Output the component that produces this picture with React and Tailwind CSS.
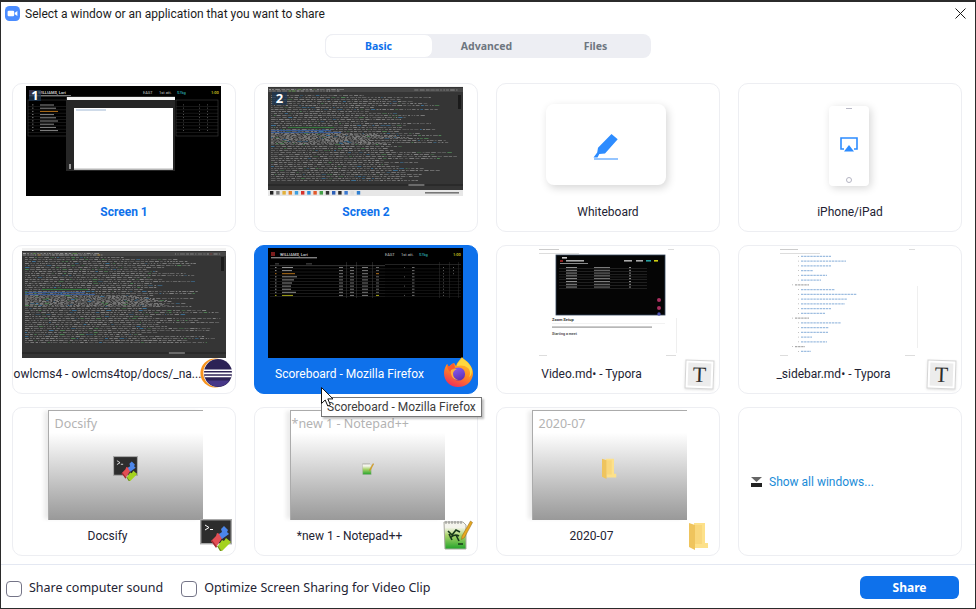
import React from 'react'

const font = { fontFamily: '"Noto Sans", "Open Sans", sans-serif' }
const labelFont = { fontFamily: 'Roboto, "Noto Sans", sans-serif' }

// small seeded generator so the greeked thumbnails stay the same on each render
function rng(seed) {
  let s = seed
  return () => {
    s = (s * 16807) % 2147483647
    return s / 2147483647
  }
}

// rows of tiny dashes standing in for unreadable, scaled down text
function textRows({ seed, x, y, width, rows, step = 2, fill = '#8e8e8e', colors = [], h = 1, minLen = 0.55 }) {
  const r = rng(seed)
  const out = []
  for (let i = 0; i < rows; i++) {
    let cx = x
    const end = x + width * (minLen + r() * (1 - minLen))
    while (cx < end) {
      const w = 1 + r() * 4
      const c = colors.length && r() < 0.1 ? colors[Math.floor(r() * colors.length)] : fill
      out.push(<rect key={i + '-' + cx} x={cx} y={y + i * step} width={w} height={h} fill={c} opacity={0.35 + r() * 0.5} />)
      cx += w + 0.7 + r()
    }
  }
  return out
}

function ScreenBadge({ n, className }) {
  return (
    <div className={'absolute flex items-center justify-center bg-[#1d3550]/75 text-white font-bold text-[13px] leading-none ' + className}>
      {n}
    </div>
  )
}

function HeaderInfo({ y }) {
  return (
    <g fontSize="4" fontFamily="Roboto" fontWeight="500">
      <text x="117" y={y} fill="#a8a8a8">EAST</text>
      <text x="133" y={y} fill="#a8a8a8">1st att.</text>
      <text x="151" y={y} fill="#2aa8a8">57kg</text>
      <text x="185" y={y} fill="#d8d820">1:00</text>
    </g>
  )
}

function Screen1Thumb() {
  return (
    <div className="relative w-[195px] h-[110px] bg-black">
      <svg width="195" height="110" className="block">
        <rect x="3" y="4" width="5" height="5" fill="#7a1c1c" />
        <text x="12" y="7.5" fontSize="4" fontWeight="700" fill="#c8c8c8" fontFamily="Roboto">WILLIAMS, Lori</text>
        <rect x="3" y="9" width="42" height="1.4" fill="#777" />
        <HeaderInfo y={7.5} />
        <rect x="2" y="14" width="61" height="36" fill="none" stroke="#3c3c3c" strokeWidth="0.6" />
        <rect x="150" y="14" width="42" height="36" fill="none" stroke="#3c3c3c" strokeWidth="0.6" />
        {[0, 1, 2, 3, 4, 5, 6, 7, 8].map((i) => (
          <g key={i}>
            <rect x="6" y={18.5 + i * 3.2} width="1.5" height="0.8" fill="#888" />
            <rect x="14" y={18.5 + i * 3.2} width={14 + (i % 3) * 2} height="1" fill={i === 2 ? '#b8741a' : '#8a8a8a'} />
            <rect x="2" y={20.5 + i * 3.2} width="61" height="0.4" fill="#383838" />
            <rect x="150" y={20.5 + i * 3.2} width="42" height="0.4" fill="#383838" />
            <rect x="157" y={18.5 + i * 3.2} width="1" height="0.8" fill="#666" />
            <rect x="173" y={18.5 + i * 3.2} width="1" height="0.8" fill="#666" />
            <rect x="181" y={18.5 + i * 3.2} width="1" height="0.8" fill="#666" />
          </g>
        ))}
        <rect x="40" y="10" width="109" height="75" fill="#262626" />
        <rect x="41" y="11" width="108" height="3" fill="#f4f4f4" />
        <rect x="48" y="22" width="99" height="62" fill="#fff" />
        <rect x="50" y="23.5" width="30" height="1" fill="#9fb7d4" />
        <rect x="48" y="82.5" width="99" height="1.5" fill="#b8b8b8" />
        <rect x="43" y="78" width="2" height="5" fill="#999" />
      </svg>
      <ScreenBadge n="1" className="left-[3px] top-[4px] w-[12px] h-[11px]" />
    </div>
  )
}

function ConsoleSvg({ width, seed, taskbar }) {
  const w = width
  const bottom = taskbar ? 104 : 110
  return (
    <svg width={w} height="110" className="block">
      <rect width={w} height="110" fill="#f2f2f2" />
      <rect y={taskbar ? 1 : 3} width={w} height={bottom} fill="#353535" />
      <rect y={taskbar ? 2 : 4} width={w} height="4" fill="#474747" />
      {textRows({ seed: seed + 1, x: 1, y: taskbar ? 3 : 5, width: w * 0.4, rows: 2, step: 1.5, fill: '#b0b0b0', colors: ['#6aa84f', '#d9a54a'], minLen: 0.9 })}
      {textRows({ seed: seed + 5, x: w * 0.75, y: taskbar ? 3.5 : 5.5, width: w * 0.24, rows: 1, fill: '#a0a0a0', colors: ['#c9423b'], minLen: 0.9 })}
      {textRows({ seed, x: 3, y: 9, width: w * 0.87, rows: 25, colors: ['#3f7fae', '#54915a'] })}
      <rect x="20" y="41" width="46" height="0.8" fill="#2f7f37" />
      <rect x="3" y="44" width="60" height="0.8" fill="#3a62a8" />
      <rect x="3" y="46" width="70" height="0.8" fill="#3a62a8" />
      {textRows({ seed: seed + 2, x: 3, y: 48, width: w * 0.96, rows: 24, colors: ['#3f7fae', '#54915a'] })}
      <rect x={w - 5} y="9" width="3" height="14" fill="#1a1a1a" />
      <rect y={bottom - 6} width={w} height="2" fill="#2a2a2a" />
      <rect x={w * 0.72} y={bottom - 6} width="16" height="2" fill="#6a6a6a" />
      {taskbar && (
        <>
          <rect y="104" width={w} height="6" fill="#e7e7e7" />
          {['#222', '#777', '#e2b13c', '#e57f2a', '#3c9fe0', '#d6322c', '#2b8fd8', '#e25a2c', '#44a047', '#333', '#2c5fb8', '#2b2b2b', '#3b79d0', '#ddd', '#2f7fd0'].map((c, i) => (
            <rect key={i} x={2 + i * 6.2} y="105" width="3.4" height="3.6" fill={c} />
          ))}
          <rect x={w - 38} y="106" width="34" height="1.6" fill="#777" />
        </>
      )}
    </svg>
  )
}

function Screen2Thumb() {
  return (
    <div className="relative w-[195px] h-[110px]">
      <ConsoleSvg width={195} seed={77} taskbar />
      <ScreenBadge n="2" className="left-[4px] top-[6px] w-[15px] h-[13px]" />
    </div>
  )
}

function ScoreboardThumb() {
  const rows = [0, 1, 2, 3, 4, 5, 6, 7, 8, 9]
  const widths = [11, 10, 13, 15, 12, 10, 9, 9, 14, 11]
  return (
    <svg width="195" height="110" className="block bg-black">
      <rect x="3" y="4" width="4" height="4" fill="#7a1c1c" />
      <text x="12" y="7.5" fontSize="4" fontWeight="700" fill="#bdbdbd" fontFamily="Roboto">WILLIAMS, Lori</text>
      <rect x="3" y="9" width="46" height="1.4" fill="#808080" />
      <HeaderInfo y={7.5} />
      <rect x="2" y="17.5" width="115" height="0.6" fill="#5a5a5a" />
      <rect x="117" y="16" width="76" height="0.5" fill="#444" />
      <rect x="7" y="15.5" width="4" height="0.8" fill="#666" />
      <rect x="38" y="15.5" width="6" height="0.8" fill="#666" />
      {[78, 88, 104].map((x) => (
        <rect key={x} x={x} y="14" width="0.4" height="36" fill="#555" />
      ))}
      {[171, 181, 190].map((x) => (
        <rect key={x} x={x} y="14" width="0.4" height="36" fill="#3e3e3e" />
      ))}
      {rows.map((i) => {
        const y = 19 + i * 3.1
        const c = i === 2 ? '#b8741a' : i === 9 ? '#a8a818' : '#8f8f8f'
        return (
          <g key={i}>
            <rect x="7" y={y} width="1.5" height="1" fill={c} />
            <rect x="14" y={y} width={widths[i]} height="1" fill={c} />
            <rect x="71" y={y} width="4" height="1" fill="#7a7a7a" />
            <rect x="82" y={y} width="4" height="1" fill="#7a7a7a" />
            <rect x="94" y={y} width="6" height="1" fill="#7a7a7a" />
            <rect x="108" y={y} width="3" height="1" fill={i === 2 || i === 9 ? c : '#666'} />
            <rect x="2" y={y + 1.7} width="115" height="0.4" fill="#3f3f3f" />
            <rect x="117" y={y + 1.7} width="76" height="0.4" fill="#2c2c2c" />
            <rect x="144" y={y} width="2.5" height="1" fill="#6c6c6c" />
            <rect x="136" y={y} width="1" height="1" fill={i % 3 === 0 ? '#5a5a5a' : '#000'} />
            <rect x="175" y={y} width="1" height="1" fill="#5c5c5c" />
            <rect x="185" y={y} width="1" height="1" fill={i < 3 ? '#5c5c5c' : '#000'} />
          </g>
        )
      })}
    </svg>
  )
}

function VideoThumb() {
  return (
    <svg width="140" height="110" className="block bg-white">
      <rect x="1" y="1" width="20" height="1" fill="#ccc" />
      <rect x="1" y="5" width="40" height="1" fill="#ddd" />
      <rect x="130" y="1" width="6" height="1" fill="#ddd" />
      <rect x="18" y="7" width="109" height="60" fill="#050505" />
      <rect x="18" y="7" width="109" height="60" fill="none" stroke="#33445a" strokeWidth="0.8" />
      <rect x="24" y="9" width="5" height="1.6" fill="#ccc" />
      <rect x="22" y="12" width="3" height="2" fill="#8c1f1f" />
      <rect x="28" y="12" width="18" height="1.6" fill="#aaa" />
      <rect x="22" y="15" width="28" height="1" fill="#888" />
      <rect x="86" y="12" width="8" height="1.6" fill="#aaa" />
      <rect x="98" y="12" width="7" height="1.6" fill="#aaa" />
      <rect x="108" y="12" width="5" height="1.6" fill="#26a0a0" />
      <rect x="116" y="12" width="4" height="1.6" fill="#cfcf10" />
      {[0, 1, 2, 3, 4, 5, 6, 7].map((i) => (
        <g key={i}>
          <rect x="21" y={20.4 + i * 2.8} width="88" height="0.4" fill="#4a4a4a" />
          <rect x="28" y={19 + i * 2.8} width="11" height="0.9" fill="#a0a0a0" />
          <rect x="56" y={19 + i * 2.8} width="16" height="0.9" fill="#8a8a8a" />
          <rect x="91" y={19 + i * 2.8} width="2" height="0.9" fill="#a0a0a0" />
        </g>
      ))}
      <circle cx="121" cy="52" r="2" fill="#a83060" />
      <circle cx="121" cy="60" r="2" fill="#a83060" />
      <circle cx="121" cy="66" r="1.7" fill="#4c50b0" />
      <text x="14" y="73" fontSize="4" fontWeight="700" fill="#333" fontFamily="Roboto">Zoom Setup</text>
      <rect x="14" y="75" width="113" height="0.5" fill="#e5e5e5" />
      <rect x="14" y="78.5" width="100" height="1.2" fill="#999" />
      <text x="14" y="87" fontSize="3.6" fontWeight="700" fill="#555" fontFamily="Roboto">Starting a meet</text>
      <rect x="138" y="70" width="0.6" height="35" fill="#e5e5e5" />
      <rect x="1" y="107" width="8" height="1" fill="#ddd" />
      <rect x="128" y="107" width="10" height="1" fill="#ddd" />
    </svg>
  )
}

function SidebarThumb() {
  const rows = [
    [22, 30], [22, 45], [22, 30], [22, 12], [22, 26], [22, 20], [16, 14],
    [22, 34], [22, 56], [22, 46], [22, 44], [22, 30], [22, 24], [16, 14],
    [22, 40], [22, 28], [22, 27], [22, 11], [22, 26], [16, 10], [22, 10],
  ]
  return (
    <svg width="139" height="110" className="block bg-white">
      <rect x="1" y="1" width="18" height="1" fill="#ccc" />
      <rect x="1" y="5" width="40" height="1" fill="#ddd" />
      <rect x="130" y="1" width="6" height="1" fill="#ddd" />
      {rows.map(([x, w], i) => (
        <g key={i}>
          <rect x={x - 3} y={8 + i * 4.75} width="1" height="0.7" fill="#aaa" />
          <line x1={x} x2={x + w} y1={8.3 + i * 4.75} y2={8.3 + i * 4.75} stroke={x === 16 ? '#aaa' : '#9dbde0'} strokeWidth="1.3" strokeDasharray="2.4 0.7" />
        </g>
      ))}
      <rect x="138" y="38" width="0.6" height="62" fill="#e5e5e5" />
      <rect x="1" y="107" width="8" height="1" fill="#ddd" />
      <rect x="126" y="107" width="10" height="1" fill="#ddd" />
    </svg>
  )
}

// the grey "minimised window" preview: shadow, title and a centred app icon
function MinimizedThumb({ title, titleClass, children }) {
  return (
    <div className="relative w-[155px] h-[110px] bg-linear-to-b from-white from-[20%] to-[#999999] border-l border-t border-[#ababab] shadow-[-5px_0_4px_-1px_rgba(0,0,0,0.08)]">
      <div className={'absolute top-[4px] text-[12.5px] text-[#b3b3b3] whitespace-nowrap ' + titleClass}>{title}</div>
      <div className="h-full flex items-center justify-center pt-[6px]">{children}</div>
    </div>
  )
}

function DocsifyIcon({ size = 32 }) {
  return (
    <svg width={size} height={size} viewBox="0 0 32 32" className="block">
      <rect x="0.7" y="0.7" width="30.6" height="24" fill="#2d2d2d" stroke="#a8a8a8" strokeWidth="1.4" />
      <path d="M5 6l4 2.5-4 2.5" fill="none" stroke="#fff" strokeWidth="1" />
      <rect x="10" y="10" width="3" height="1" fill="#fff" />
      <path d="M11 22l5-5 1-3 3 1 3 3-7 10z" fill="#e34f55" />
      <path d="M11 22l5 7 1-1.5-5-6.5z" fill="#a32c31" />
      <path d="M19 15l3-2-1-3 3-3 4 4-1 2 2 2-7 5z" fill="#4c86ea" />
      <path d="M18 27l4-6 2 1 2-3 5 4-9 9z" fill="#a4d21f" />
      <path d="M20 32l-3-5 1-.5 4 5.5z" fill="#6e9410" />
    </svg>
  )
}

function FolderIcon({ size = 20 }) {
  return (
    <svg width={size} height={size * 1.4} viewBox="0 0 20 28" className="block">
      <path d="M5 1h11v20h3v5H6z" fill="#fde18a" />
      <path d="M6 3h7v19H6z" fill="#f9d77c" />
      <path d="M0 1l6 2v25l-6-3z" fill="#efc45d" />
    </svg>
  )
}

function NotepadIcon({ size = 30, tiny }) {
  return (
    <svg width={size} height={size} viewBox="0 0 30 30" className="block">
      <defs>
        <linearGradient id={tiny ? 'np2' : 'np1'} x1="0" y1="0" x2="0" y2="1">
          <stop offset="0.2" stopColor="#f4f4ec" />
          <stop offset="0.5" stopColor="#a9d46a" />
          <stop offset="1" stopColor="#22a32a" />
        </linearGradient>
      </defs>
      <path d="M1 2h19l3 3v24H2z" fill={`url(#${tiny ? 'np2' : 'np1'})`} stroke="#a9a9a0" strokeWidth="1" />
      <path d="M3 1v3M6 1v3M9 1v3M12 1v3M15 1v3M18 1v3" stroke="#777" strokeWidth="0.8" />
      {!tiny && <path d="M5 11l4 4 4-5 4 2M7 18c3-3 6-4 9-2M6 14l3 6M13 15l3 6M15 24h5" fill="none" stroke="#17381a" strokeWidth="1.6" />}
      <path d="M27.5 1l2 1.5-8 15-3 2 .5-3.5z" fill="#e8a820" stroke="#8a6514" strokeWidth="0.5" />
    </svg>
  )
}

function EclipseIcon() {
  return (
    <svg width="32" height="30" viewBox="0 0 32 30" className="block">
      <circle cx="15" cy="15" r="14.6" fill="#f7941e" />
      <circle cx="17.3" cy="15" r="14" fill="#fff" />
      <circle cx="18" cy="15" r="14" fill="#2c2255" />
      <path d="M4 11.5h28v1.6H4zM4 14.6h28v1.6H4zM4.6 17.8h27v1.4h-27z" fill="#fff" />
      <path d="M6.5 22.5a14 14 0 0 0 23 0z" fill="#473788" />
    </svg>
  )
}

function FirefoxIcon() {
  return (
    <svg width="31" height="32" viewBox="0 0 31 32" className="block">
      <defs>
        <linearGradient id="ff1" x1="0.7" y1="0" x2="0.25" y2="1">
          <stop offset="0" stopColor="#ffcf30" />
          <stop offset="0.5" stopColor="#ff8a1f" />
          <stop offset="1" stopColor="#f1295c" />
        </linearGradient>
        <linearGradient id="ff2" x1="0.3" y1="0" x2="0.7" y2="1">
          <stop offset="0" stopColor="#8a5cf0" />
          <stop offset="1" stopColor="#5b2db0" />
        </linearGradient>
      </defs>
      <path d="M19 1c2 3 6 4 8 8 3 4 4 9 2 13-2 6-8 9-14 9C7 31 1 25 1 17c0-3 1-6 3-9 1 1 1 2 2 3 1-2 3-3 5-4l2 3c1-4 4-6 6-9z" fill="url(#ff1)" />
      <path d="M19 2c-2 3-5 5-5 8 3-1 8-1 11 2 2 2 3 6 1 9 2-1 3-4 3-7-1-5-5-8-10-12z" fill="#ffd83e" />
      <path d="M4 8c0 3 1 6 3 8 1-2 3-3 5-4l-1-5c-2 1-4 2-5 4z" fill="#ff5a2e" />
      <circle cx="15.5" cy="18" r="6.6" fill="url(#ff2)" />
      <path d="M8 14c-1 5 2 10 7 10-3-1-5-3-5-6 0-2 1-4 4-5-2 0-5 0-6 1z" fill="#ffb03a" />
    </svg>
  )
}

function TyporaIcon() {
  return (
    <div className="w-[29px] h-[29px] bg-white border border-[#d4d4d4] rotate-2 flex items-center justify-center shadow-sm">
      <div className="w-[23px] h-[23px] bg-[#ececec] flex items-center justify-center text-[22px] leading-none text-[#2d2d2d] font-['Liberation_Serif',serif]">T</div>
    </div>
  )
}

function Card({ label, labelClass = 'text-[#232333]', selected, badge, badgeClass, children, contentClass = '' }) {
  return (
    <div className={'relative h-[149px] rounded-[10px] border flex flex-col items-center pt-[2px] ' + (selected ? 'bg-[#0e71eb] border-[#0e71eb]' : 'bg-white border-[#edeef2]')}>
      <div className={'h-[110px] flex justify-center ' + contentClass}>{children}</div>
      <div className={'h-[32px] leading-[32px] text-[12px] whitespace-nowrap text-center ' + (badge ? 'mr-[33px] ' : '') + labelClass} style={labelFont}>{label}</div>
      {badge && <div className={'absolute ' + badgeClass}>{badge}</div>}
    </div>
  )
}

export default function App() {
  return (
    <div className="relative w-[976px] h-[609px] bg-white border border-[#2b2b2b] border-t-2 flex flex-col overflow-hidden" style={font}>
      <div className="h-[23px] flex items-center pl-[4px] pr-[9px] text-[12px] text-[#1c1c1c]" style={labelFont}>
        <svg width="15" height="15" viewBox="0 0 15 15" className="mr-[5px]">
          <rect width="15" height="15" rx="4.5" fill="#4a8cff" />
          <rect x="2.6" y="4.7" width="6.6" height="5.6" rx="1.2" fill="#fff" />
          <path d="M9.8 6.8l2.6-1.9v5.2L9.8 8.2z" fill="#fff" />
        </svg>
        <span>Select a window or an application that you want to share</span>
        <svg width="11" height="11" viewBox="0 0 11 11" className="ml-auto">
          <path d="M.5.5l10 10M10.5.5l-10 10" stroke="#1a1a1a" strokeWidth="1" />
        </svg>
      </div>

      <div className="mt-[9px] self-center w-[326px] h-[24px] pt-px rounded-[8px] bg-[#edeef3] flex text-[10.5px] font-bold ml-[-1px] text-[#6e7680]">
        <div className="w-[108px] h-[24px] mt-[-1px] rounded-[8px] bg-white border border-[#edeef3] text-[#0e71eb] flex items-center justify-center pt-px">Basic</div>
        <div className="w-[108px] flex items-center justify-center">Advanced</div>
        <div className="w-[110px] flex items-center justify-center">Files</div>
      </div>

      <div className="mt-[25px] pl-[11px] pr-[13px] grid grid-cols-4 gap-x-[18px] gap-y-[13px]">
        <Card label="Screen 1" labelClass="text-[#0e71eb] font-bold" contentClass="pr-[1px]"><Screen1Thumb /></Card>
        <Card label="Screen 2" labelClass="text-[#0e71eb] font-bold" contentClass="pr-[1px]"><Screen2Thumb /></Card>
        <Card label="Whiteboard" contentClass="pt-[18px] pr-[4px]">
          <div className="w-[120px] h-[81px] rounded-[8px] bg-white shadow-[2px_3px_8px_rgba(0,0,0,0.16)] flex items-center justify-center pt-[4px]">
            <svg width="26" height="27" viewBox="0 0 26 27">
              <path d="M18.5 1l6.2 5.2L12 20.5 6.3 21 4.5 24.5H.5L4.2 19.4 5 14.8z" fill="#2d8cff" />
              <rect x="1" y="25.5" width="24" height="1" fill="#2d8cff" />
            </svg>
          </div>
        </Card>
        <Card label="iPhone/iPad" contentClass="pt-[20px] pr-[2px]">
          <div className="w-[40px] h-[80px] rounded-[4px] bg-white shadow-[2px_2px_8px_rgba(0,0,0,0.16)] flex flex-col items-center justify-between pt-[2px] pb-[3px]">
            <div className="w-[6px] h-px bg-[#b9b9c6]" />
            <svg width="18" height="15" viewBox="0 0 18 15" className="mt-[2px]">
              <path d="M4 12H1V1h16v11h-3" fill="none" stroke="#2d8cff" strokeWidth="1.6" />
              <path d="M9 8l5 6.5H4z" fill="#2d8cff" />
            </svg>
            <div className="w-[6px] h-[6px] rounded-full border border-[#b4b4c2]" />
          </div>
        </Card>

        <Card label="owlcms4 - owlcms4top/docs/_na..." badge={<EclipseIcon />} badgeClass="left-[187px] top-[112px]"><ConsoleSvg width={204} seed={991} /></Card>
        <Card selected label="Scoreboard - Mozilla Firefox" labelClass="text-white" badge={<FirefoxIcon />} badgeClass="left-[188px] top-[110px]" contentClass="pr-[1px]"><ScoreboardThumb /></Card>
        <Card label="Video.md• - Typora" badge={<TyporaIcon />} badgeClass="left-[188px] top-[114px]"><VideoThumb /></Card>
        <Card label="_sidebar.md• - Typora" badge={<TyporaIcon />} badgeClass="left-[188px] top-[114px]" contentClass="pr-[3px]"><SidebarThumb /></Card>

        <Card label="Docsify" badge={<DocsifyIcon />} badgeClass="left-[187px] top-[111px]" contentClass="pl-[2px]">
          <MinimizedThumb title="Docsify" titleClass="left-[6px]"><DocsifyIcon size={25} /></MinimizedThumb>
        </Card>
        <Card label="*new 1 - Notepad++" badge={<NotepadIcon />} badgeClass="left-[188px] top-[112px]" contentClass="pl-[2px]">
          <MinimizedThumb title="*new 1 - Notepad++" titleClass="left-[1px]"><NotepadIcon size={12} tiny /></MinimizedThumb>
        </Card>
        <Card label="2020-07" badge={<FolderIcon />} badgeClass="left-[192px] top-[114px]" contentClass="pl-[2px]">
          <MinimizedThumb title="2020-07" titleClass="left-[6px]"><FolderIcon size={15} /></MinimizedThumb>
        </Card>
        <div className="h-[149px] rounded-[10px] border border-[#edeef2] flex items-center pl-[12px] text-[12px] text-[#1a8cd8]" style={labelFont}>
          <svg width="12" height="10" viewBox="0 0 12 10" className="mr-[6px]">
            <path d="M0 0h11L5.5 5z" fill="#666" />
            <rect y="6" width="11" height="4" fill="#222" />
          </svg>
          <span>Show all windows...</span>
        </div>
      </div>

      <div className="mt-[8px] h-px bg-[#e4e8f2]" />
      <div className="flex-1 flex items-center pl-[5px] pr-[16px] pt-[2px] text-[12.5px] text-[#232333]">
        <div className="w-[16px] h-[16px] rounded-[4px] border border-[#747487] mr-[7px] mt-[3px]" />
        <span className="mt-[1px]">Share computer sound</span>
        <div className="w-[16px] h-[16px] rounded-[4px] border border-[#747487] ml-[18px] mr-[7px] mt-[3px]" />
        <span className="mt-[1px]">Optimize Screen Sharing for Video Clip</span>
        <div className="ml-auto w-[99px] h-[23px] rounded-[6px] bg-[#0e71eb] text-white font-bold text-[12px] flex items-center justify-center">Share</div>
      </div>

      <div className="absolute left-[320px] top-[395px] w-[161px] h-[20px] bg-white border border-[#767676] shadow-[2px_2px_2px_rgba(0,0,0,0.25)] flex items-center pl-[5px] text-[12px] text-[#3c3c3c] whitespace-nowrap" style={labelFont}>
        Scoreboard - Mozilla Firefox
      </div>
      <svg width="13" height="21" viewBox="0 0 13 21" className="absolute left-[320px] top-[385px]">
        <path d="M.5.5v16l3.7-3.5 2.6 6 2.6-1.1-2.6-6h5.2z" fill="#fff" stroke="#111" strokeWidth="1" />
      </svg>
    </div>
  )
}
